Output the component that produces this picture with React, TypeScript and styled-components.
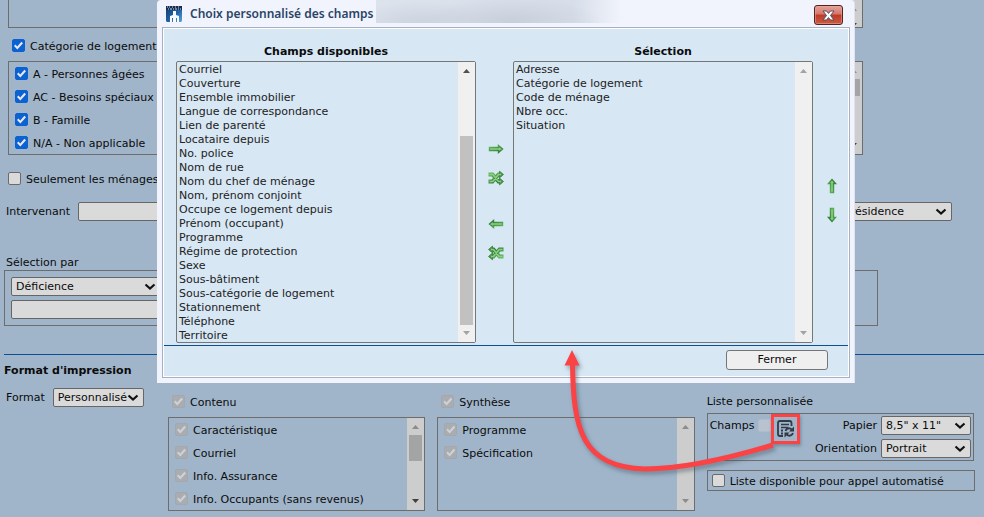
import React from "react";
import styled, { createGlobalStyle } from "styled-components";

const GlobalStyle = createGlobalStyle`
  * { box-sizing: border-box; }
  body {
    margin: 0;
    background: #a0b5ca;
    color: #0b0b0b;
    font: 11px/14px "DejaVu Sans", Verdana, sans-serif;
  }
  input, select, button { font: inherit; color: inherit; }
`;

const Page = styled.div`
  position: relative;
  min-height: 100vh;
  overflow: hidden;
`;

const Form = styled.main`
  display: flex;
  flex-direction: column;
`;

const Criteria = styled.section`
  display: flex;
  flex-direction: column;
  padding-left: 8px;
  height: 354px;
`;

const ScrollBox = styled.div<{ $cut?: boolean }>`
  display: grid;
  grid-template-columns: 1fr 17px;
  height: ${(p) => (p.$cut ? 28 : 94)}px;
  margin-right: 121px;
  border: 1px solid #6d6d6d;
  border-top-width: ${(p) => (p.$cut ? 0 : 1)}px;
`;

const CheckList = styled.div`
  display: flex;
  flex-direction: column;
  gap: 9px;
  min-width: 0;
  padding: 5px 0 0 6px;
  white-space: nowrap;
`;

const CheckLabel = styled.label<{ $space?: string }>`
  display: flex;
  align-items: flex-start;
  gap: 5px;
  height: 14px;
  margin: ${(p) => p.$space ?? "0"};
  line-height: 16px;
  white-space: nowrap;
`;

const Tick = styled.input`
  appearance: none;
  flex: none;
  display: grid;
  place-items: center;
  width: 13px;
  height: 13px;
  margin: 0;
  border: 1px solid #6a6a6a;
  border-radius: 2px;
  background: #dadada;

  &:checked {
    border-color: #0b62cf;
    background: #0b62d3;
  }
  &:checked::after {
    content: "";
    width: 9px;
    height: 9px;
    background: #e8e8e8;
    clip-path: polygon(0 55%, 16% 39%, 36% 61%, 82% 8%, 100% 24%, 37% 94%);
  }
  &:disabled {
    border-color: #a4a8ac;
    background: #a9adb1;
  }
  &:disabled::after { background: #ced2d6; }
  &:disabled:not(:checked) {
    border-color: #b0bcc9;
    background: #b8c3cf;
  }
`;

const FieldRow = styled.div`
  display: flex;
  align-items: center;
  gap: 8px;
  margin: 16px 32px 0 -2px;
`;

const TextInput = styled.input`
  flex: 1;
  width: 100%;
  min-width: 0;
  height: 19px;
  border: 1px solid #666;
  border-radius: 2px;
  background: #dadada;
`;

const SelectWrap = styled.span<{ $w: number }>`
  display: grid;
  flex: none;
  grid-template-columns: 1fr 16px;
  align-items: center;
  width: ${(p) => p.$w}px;
  height: 19px;
  border: 1px solid #666;
  border-radius: 2px;
  background: #dadada;
  select {
    grid-area: 1 / 1 / 2 / 3;
    appearance: none;
    width: 100%;
    height: 17px;
    padding: 0 4px;
    border: 0;
    background: none;
  }
  svg {
    grid-area: 1 / 2;
    pointer-events: none;
  }
`;

const FieldsetTitle = styled.div`
  margin: 35px 0 0 -2px;
`;

const DeficiencyBox = styled.div`
  display: flex;
  flex-direction: column;
  gap: 4px;
  height: 56px;
  margin: 0 106px 0 -4px;
  padding: 6px 6px 0;
  border: 1px solid #6d6d6d;
`;

const InputLine = styled.div`
  display: flex;
  width: 50%;
`;

const PrintFormat = styled.section`
  margin-left: 4px;
  padding-top: 9px;
  border-top: 1px solid #0b4f94;
`;

const SectionTitle = styled.h2`
  margin: 0;
  font: inherit;
  font-weight: 700;
`;

const PrintGrid = styled.div`
  display: grid;
  grid-template-columns: 152px 257fr 257fr 268fr;
  column-gap: 12px;
  padding-right: 9px;
`;

const FormatField = styled.label`
  display: flex;
  align-items: center;
  align-self: start;
  gap: 8px;
  margin-top: 10px;
  padding-left: 2px;
`;

const Column = styled.div`
  display: flex;
  flex-direction: column;
  min-width: 0;
  padding-top: 17px;
`;

const ListBox = styled.div`
  display: grid;
  grid-template-columns: 1fr 17px;
  height: 94px;
  margin-top: 8px;
  border: 1px solid #6d6d6d;
`;

const PaperBox = styled.div`
  display: flex;
  justify-content: space-between;
  height: 48px;
  margin: 4px 1px 9px 0;
  padding: 2px 2px 0;
  border: 1px solid #6d6d6d;
`;

const FieldsGroup = styled.div`
  display: flex;
  align-items: flex-start;
  padding-top: 3px;
  label { display: flex; gap: 4px; }
`;

const FieldsButton = styled.button`
  display: block;
  margin: -5px 0 0 0;
  padding: 2px 3px;
  border: 3px solid #fb4244;
  background: none;
  line-height: 0;
  box-shadow: 1px 2px 3px #5d6a7899;
`;

const PaperOptions = styled.div`
  display: flex;
  flex-direction: column;
  align-items: flex-end;
  gap: 4px;
  label {
    display: flex;
    align-items: center;
    gap: 4px;
  }
`;

const CallBox = styled.div`
  display: flex;
  align-items: center;
  height: 21px;
  padding-left: 4px;
  border: 1px solid #6d6d6d;
`;

const Bar = styled.div<{ $dim?: boolean }>`
  display: flex;
  flex-direction: column;
  align-items: center;
  justify-content: space-between;
  min-height: 0;
  overflow: hidden;
  background: ${(p) => (p.$dim ? "#cdcdcd" : "#f0f0f0")};
`;

const Thumb = styled.div<{ $top: number; $size: number; $dim?: boolean }>`
  flex: none;
  width: 13px;
  height: ${(p) => p.$size}px;
  margin-top: ${(p) => p.$top}px;
  margin-bottom: auto;
  background: ${(p) => (p.$dim ? "#a4a4a4" : "#c1c1c1")};
`;

const ArrowCell = styled.svg`
  flex: none;
  display: block;
  width: 17px;
  height: 17px;
`;

const Dialog = styled.div`
  position: absolute;
  inset: 0 129px auto 157px;
  padding: 0 4px 5px 5px;
  border: solid #dce4ef;
  border-width: 0 1px 0 0;
  border-radius: 4px 4px 0 0;
  background: #f1f4fc;
`;

const TitleBar = styled.header`
  display: flex;
  align-items: center;
  height: 27px;
  padding: 0 7px 0 4px;
`;

const DialogTitle = styled.h1`
  margin: 0 0 0 8px;
  color: #2a4468;
  font: 600 12px/18px "Noto Sans", "Open Sans", sans-serif;
  white-space: nowrap;
`;

const Redacted = styled.div`
  width: 246px;
  height: 23px;
  margin: 0 0 4px -4px;
  background:
    radial-gradient(ellipse 90px 26px at 55% 100%, #c6ceda, transparent),
    radial-gradient(ellipse 70px 22px at 18% 100%, #cbd3df, transparent),
    linear-gradient(90deg, #dde3ed 0, #d7dee9 80%, #e1e6f0 88%, #f1f4fc 100%);
`;

const CloseButton = styled.button`
  display: grid;
  place-items: center;
  width: 29px;
  height: 20px;
  margin: 3px 0 0 auto;
  padding: 0;
  border: 1px solid #4d2422;
  border-radius: 3px;
  background: linear-gradient(#e5a298 0, #d6756a 45%, #bd3a28 50%, #cf5a40 100%);
  box-shadow: inset 0 0 0 1px #e9a79c88;
`;

const DialogBody = styled.div`
  border: 1px solid #a5b0c3;
  outline: 1px solid #fff;
  outline-offset: -2px;
  background: #d7e7f4;
`;

const Transfer = styled.div`
  display: grid;
  grid-template-columns: 1fr 37px 1fr 36px;
  padding: 17px 0 2px 13px;
`;

const Panel = styled.div`
  display: flex;
  flex-direction: column;
  gap: 2px;
  min-width: 0;
  label {
    text-align: center;
    font-weight: 700;
  }
`;

const ListFrame = styled.div`
  display: grid;
  grid-template-columns: 1fr 17px;
  height: 282px;
  border: 1px solid #767676;
  border-radius: 2px;
`;

const Options = styled.select`
  width: 100%;
  height: 280px;
  min-width: 0;
  padding: 1px 0 0;
  border: 0;
  outline: 0;
  background: transparent;
  color: #222;
  overflow: hidden;
  scrollbar-width: none;
  option {
    height: 14px;
    min-height: 14px;
    padding: 0 2px;
    line-height: 14px;
  }
`;

const Moves = styled.div<{ $top: number }>`
  display: flex;
  flex-direction: column;
  align-items: center;
  padding: ${(p) => p.$top}px 0 0 2px;
`;

const MoveButton = styled.button<{ $gap: number }>`
  width: 16px;
  height: 16px;
  margin-bottom: ${(p) => p.$gap}px;
  padding: 0;
  border: 0;
  background: none;
  line-height: 0;
`;

const Footer = styled.footer`
  display: flex;
  justify-content: flex-end;
  height: 32px;
  margin: 0 1px;
  padding: 4px 20px 0 0;
  border-top: 1px solid #0b4f94;
`;

const FooterButton = styled.button`
  width: 102px;
  height: 20px;
  padding: 0;
  border: 1px solid #767676;
  border-radius: 3px;
  background: #efefef;
`;

const Callout = styled.svg`
  position: absolute;
  top: 340px;
  left: 560px;
  width: 230px;
  height: 150px;
  pointer-events: none;
  filter: drop-shadow(2px 3px 2px #4b586688);
`;

function Scrollbar({ dim, off, downOff, top = 0, size = 0 }: {
  dim?: boolean; off?: boolean; downOff?: boolean; top?: number; size?: number;
}) {
  const grey = dim ? "#8b8b8b" : "#a3a3a3";
  const upOn = !off && !dim;
  return (
    <Bar $dim={dim} aria-hidden="true">
      <ArrowCell viewBox="0 0 17 17"><path d="M5 11h7L8.500 7z" fill={upOn ? "#505050" : grey} /></ArrowCell>
      {size > 0 && <Thumb $dim={dim} $top={top} $size={size} />}
      <ArrowCell viewBox="0 0 17 17"><path d="M5 6h7l-3.500 4z" fill={off || downOff ? grey : "#404040"} /></ArrowCell>
    </Bar>
  );
}

function Dropdown({ id, width, value, label }: { id: string; width: number; value: string; label?: string }) {
  return (
    <SelectWrap $w={width}>
      <select id={id} defaultValue={value} aria-label={label}><option>{value}</option></select>
      <svg width="12" height="8" viewBox="0 0 12 8"><path d="M1.500 1.500l4.500 4 4.500-4" fill="none" stroke="#111" strokeWidth="2.200" /></svg>
    </SelectWrap>
  );
}

function Check({ text, on = true, disabled, space }: { text: string; on?: boolean; disabled?: boolean; space?: string }) {
  return (
    <CheckLabel $space={space}>
      <Tick type="checkbox" defaultChecked={on} disabled={disabled} />
      {text}
    </CheckLabel>
  );
}

function Gradient({ id }: { id: string }) {
  return (
    <defs>
      <linearGradient id={id} x1="0" y1="0" x2="1" y2="1">
        <stop offset="0" stopColor="#63bb5c" />
        <stop offset="1" stopColor="#2c7433" />
      </linearGradient>
    </defs>
  );
}

function Arrow({ turn = 0 }: { turn?: number }) {
  const id = `arrow${turn}`;
  return (
    <svg width="16" height="16" viewBox="0 0 16 16">
      <Gradient id={id} />
      <path transform={`rotate(${turn} 8 8)`} d="M1.500 6.500h9V4.500L14.500 8l-4 3.500v-2h-9z" fill="#8ccd84" stroke={`url(#${id})`} strokeWidth="1.400" />
    </svg>
  );
}

function Shuffle({ back }: { back?: boolean }) {
  const id = back ? "shuffleBack" : "shuffle";
  return (
    <svg width="16" height="16" viewBox="0 0 16 16">
      <Gradient id={id} />
      <g transform={back ? "rotate(180 8 8)" : undefined} fill="none">
        <path d="M.5 4.500h4l6 7h2M.5 11.500h4l6-7h2" stroke={`url(#${id})`} strokeWidth="3.800" />
        <path d="M11.500 1.200L15.500 4.500l-4 3.400zM11.500 8.100l4 3.400-4 3.400z" fill="#4d9a4c" stroke="#347d3b" strokeWidth=".8" />
        <path d="M1.500 11.500h3.400l5.600-7h2.500M1.500 4.500h3.400l5.600 7h2.500" stroke="#8fce88" strokeWidth="1.500" />
      </g>
    </svg>
  );
}

function AppIcon() {
  return (
    <svg width="16" height="16" viewBox="0 0 16 16" aria-hidden="true">
      <defs>
        <linearGradient id="appBlue" x1="0" y1="0" x2="1" y2="1">
          <stop offset="0" stopColor="#123a6c" />
          <stop offset=".6" stopColor="#2167aa" />
          <stop offset="1" stopColor="#60a5dc" />
        </linearGradient>
      </defs>
      <path d="M0 0h16v15l-1 1H1l-1-1z" fill="url(#appBlue)" />
      <path d="M0 0h16v4H0z" fill="#152c4e" />
      <path d="M1 1h1M3 1h1M6 1h1M9 1h1M12 1h1M2 3h1M4 3h2M7 3h1M9 3h2M12 3h1M14 3h1" stroke="#d3e1f0" />
      <path d="M7 5h3v4l3 1v6h-2v-4h-1v4H7v-4H6v4H4v-6l3-1z" fill="#f7faff" />
    </svg>
  );
}

function ListSyncIcon() {
  return (
    <svg width="17" height="20" viewBox="0 0 17 20" fill="none" stroke="#303b46" strokeWidth="1.800">
      <path d="M6 17H3Q1 17 1 15V4Q1 2 3 2h9.500q2 0 2 2v3" />
      <path d="M4 5.500h8M4 8.500h7" strokeWidth="1.300" />
      <path d="M4 11.500h2M4 14.500h2" strokeWidth="2" />
      <path d="M8.500 12q1.500-3.500 5-2.500l2 2M16 14q-1.500 3.500-5 2.500L9 14.500" />
      <path d="M17 7.500v5h-5zM7.500 18.500v-5h5z" fill="#303b46" stroke="none" />
    </svg>
  );
}

const AVAILABLE = [
  "Courriel", "Couverture", "Ensemble immobilier", "Langue de correspondance", "Lien de parenté",
  "Locataire depuis", "No. police", "Nom de rue", "Nom du chef de ménage", "Nom, prénom conjoint",
  "Occupe ce logement depuis", "Prénom (occupant)", "Programme", "Régime de protection", "Sexe",
  "Sous-bâtiment", "Sous-catégorie de logement", "Stationnement", "Téléphone", "Territoire",
];
const SELECTED = ["Adresse", "Catégorie de logement", "Code de ménage", "Nbre occ.", "Situation"];
const CATEGORIES = ["A - Personnes âgées", "AC - Besoins spéciaux", "B - Famille", "N/A - Non applicable"];
const CONTENT = ["Caractéristique", "Courriel", "Info. Assurance", "Info. Occupants (sans revenus)"];
const SUMMARY = ["Programme", "Spécification"];

function FieldsDialog() {
  return (
    <Dialog role="dialog" aria-labelledby="dialog-title">
      <TitleBar>
        <AppIcon />
        <DialogTitle id="dialog-title">Choix personnalisé des champs -</DialogTitle>
        <Redacted />
        <CloseButton aria-label="Fermer la fenêtre">
          <svg width="13" height="11" viewBox="0 0 13 11">
            <path d="M1 1h3.500l2 2.400L8.500 1H12L8.500 5.500 12 10H8.500l-2-2.400L4.500 10H1l3.500-4.500z" fill="#fff" stroke="#4c5363" />
          </svg>
        </CloseButton>
      </TitleBar>
      <DialogBody>
        <Transfer>
          <Panel>
            <label htmlFor="available">Champs disponibles</label>
            <ListFrame>
              <Options id="available" multiple size={20}>
                {AVAILABLE.map((t) => <option key={t}>{t}</option>)}
              </Options>
              <Scrollbar top={57} size={189} downOff />
            </ListFrame>
          </Panel>
          <Moves $top={96}>
            <MoveButton $gap={13} aria-label="Ajouter"><Arrow /></MoveButton>
            <MoveButton $gap={30} aria-label="Tout ajouter"><Shuffle /></MoveButton>
            <MoveButton $gap={13} aria-label="Retirer"><Arrow turn={180} /></MoveButton>
            <MoveButton $gap={0} aria-label="Tout retirer"><Shuffle back /></MoveButton>
          </Moves>
          <Panel>
            <label htmlFor="selected">Sélection</label>
            <ListFrame>
              <Options id="selected" multiple size={20}>
                {SELECTED.map((t) => <option key={t}>{t}</option>)}
              </Options>
              <Scrollbar off />
            </ListFrame>
          </Panel>
          <Moves $top={133}>
            <MoveButton $gap={13} aria-label="Monter"><Arrow turn={-90} /></MoveButton>
            <MoveButton $gap={0} aria-label="Descendre"><Arrow turn={90} /></MoveButton>
          </Moves>
        </Transfer>
        <Footer><FooterButton>Fermer</FooterButton></Footer>
      </DialogBody>
    </Dialog>
  );
}

export default function App() {
  return (
    <Page>
      <GlobalStyle />
      <Form>
        <Criteria>
          <ScrollBox $cut><span /><Scrollbar dim /></ScrollBox>
          <Check text="Catégorie de logement" space="11px 0 8px 4px" />
          <ScrollBox>
            <CheckList>{CATEGORIES.map((t) => <Check key={t} text={t} />)}</CheckList>
            <Scrollbar dim size={17} />
          </ScrollBox>
          <Check text="Seulement les ménages" on={false} space="17px 0 0 0" />
          <FieldRow>
            <label htmlFor="worker">Intervenant</label>
            <TextInput id="worker" type="text" />
            <Dropdown id="home" width={150} value="Lieu de résidence" label="Résidence" />
          </FieldRow>
          <FieldsetTitle>Sélection par</FieldsetTitle>
          <DeficiencyBox>
            <Dropdown id="deficiency" width={150} value="Déficience" label="Sélection par" />
            <InputLine><TextInput type="text" aria-label="Valeur" /></InputLine>
          </DeficiencyBox>
        </Criteria>
        <PrintFormat>
          <SectionTitle>Format d'impression</SectionTitle>
          <PrintGrid>
            <FormatField htmlFor="format">
              Format
              <Dropdown id="format" width={91} value="Personnalisé" />
            </FormatField>
            <Column>
              <Check text="Contenu" disabled space="0 0 0 4px" />
              <ListBox>
                <CheckList>{CONTENT.map((t) => <Check key={t} text={t} disabled />)}</CheckList>
                <Scrollbar dim size={26} />
              </ListBox>
            </Column>
            <Column>
              <Check text="Synthèse" disabled space="0 0 0 4px" />
              <ListBox>
                <CheckList>{SUMMARY.map((t) => <Check key={t} text={t} disabled />)}</CheckList>
                <Scrollbar dim off />
              </ListBox>
            </Column>
            <Column>
              <div>Liste personnalisée</div>
              <PaperBox>
                <FieldsGroup>
                  <label>Champs <Tick type="checkbox" disabled /></label>
                  <FieldsButton aria-label="Choisir les champs"><ListSyncIcon /></FieldsButton>
                </FieldsGroup>
                <PaperOptions>
                  <label htmlFor="paper">Papier <Dropdown id="paper" width={90} value={'8,5" x 11"'} /></label>
                  <label htmlFor="orientation">Orientation <Dropdown id="orientation" width={90} value="Portrait" /></label>
                </PaperOptions>
              </PaperBox>
              <CallBox><Check text="Liste disponible pour appel automatisé" on={false} /></CallBox>
            </Column>
          </PrintGrid>
        </PrintFormat>
      </Form>
      <FieldsDialog />
      <Callout viewBox="0 0 230 150" aria-hidden="true">
        <path d="M12.500 22C13 90 22 127 85 129C125 129 170 118 213 105" fill="none" stroke="#fb4244" strokeWidth="5" />
        <path d="M12 10l7.500 15.500h-15z" fill="#fb4244" />
      </Callout>
    </Page>
  );
}
